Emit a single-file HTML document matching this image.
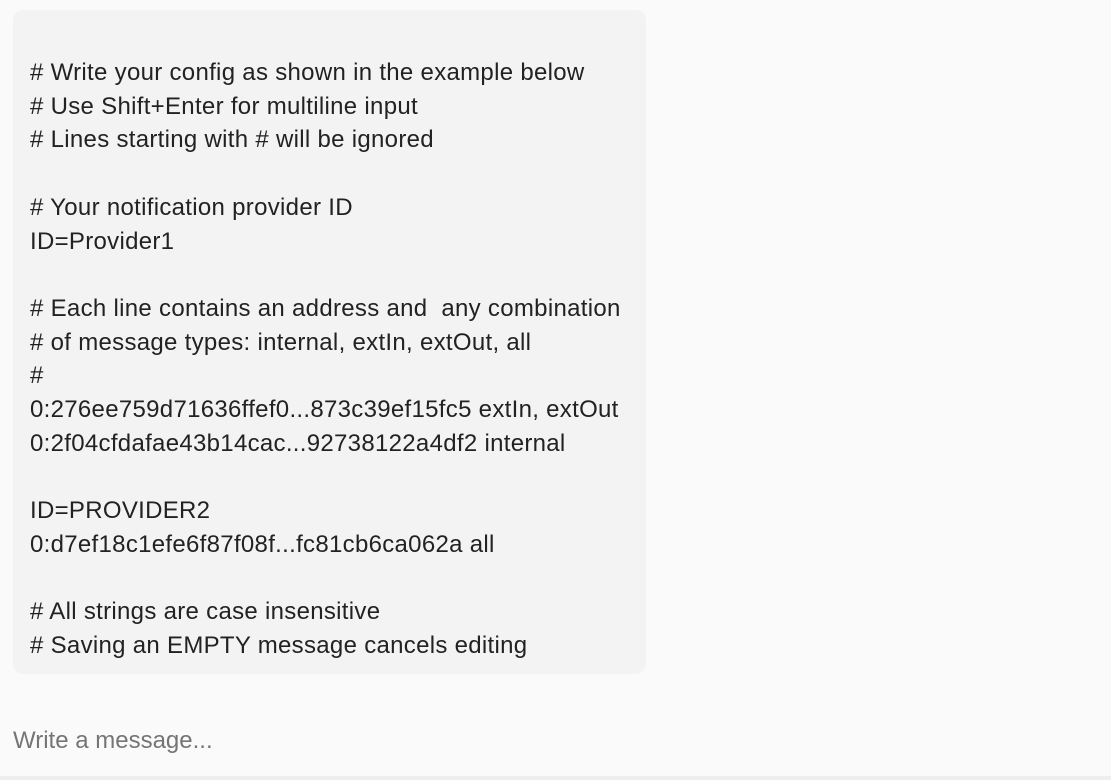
<!DOCTYPE html>
<html><head><meta charset="utf-8"><style>
html,body{margin:0;padding:0;width:1111px;height:780px;background:#fafafa;overflow:hidden;font-family:"Liberation Sans",sans-serif;}
.box{position:absolute;left:13px;top:10px;width:633px;height:664px;background:#f3f3f3;border-radius:10px;}
pre{position:absolute;left:30px;top:56px;margin:0;font-family:"Liberation Sans",sans-serif;font-size:24px;line-height:33.7px;color:#222;white-space:pre;letter-spacing:0.3px;}
.ph{position:absolute;left:13px;top:724px;font-size:24px;color:#757575;line-height:34px;letter-spacing:0px;}
.bot{position:absolute;left:0;top:776px;width:1111px;height:4px;background:#eeeeee;}
</style></head><body>
<div class="box"></div>
<pre># Write your config as shown in the example below
# Use Shift+Enter for multiline input
# Lines starting with # will be ignored

# Your notification provider ID
ID=Provider1

# Each line contains an address and  any combination
# of message types: internal, extIn, extOut, all
#
0:276ee759d71636ffef0...873c39ef15fc5 extIn, extOut
0:2f04cfdafae43b14cac...92738122a4df2 internal

ID=PROVIDER2
0:d7ef18c1efe6f87f08f...fc81cb6ca062a all

# All strings are case insensitive
# Saving an EMPTY message cancels editing</pre>
<div class="ph">Write a message...</div>
<div class="bot"></div>
</body></html>
